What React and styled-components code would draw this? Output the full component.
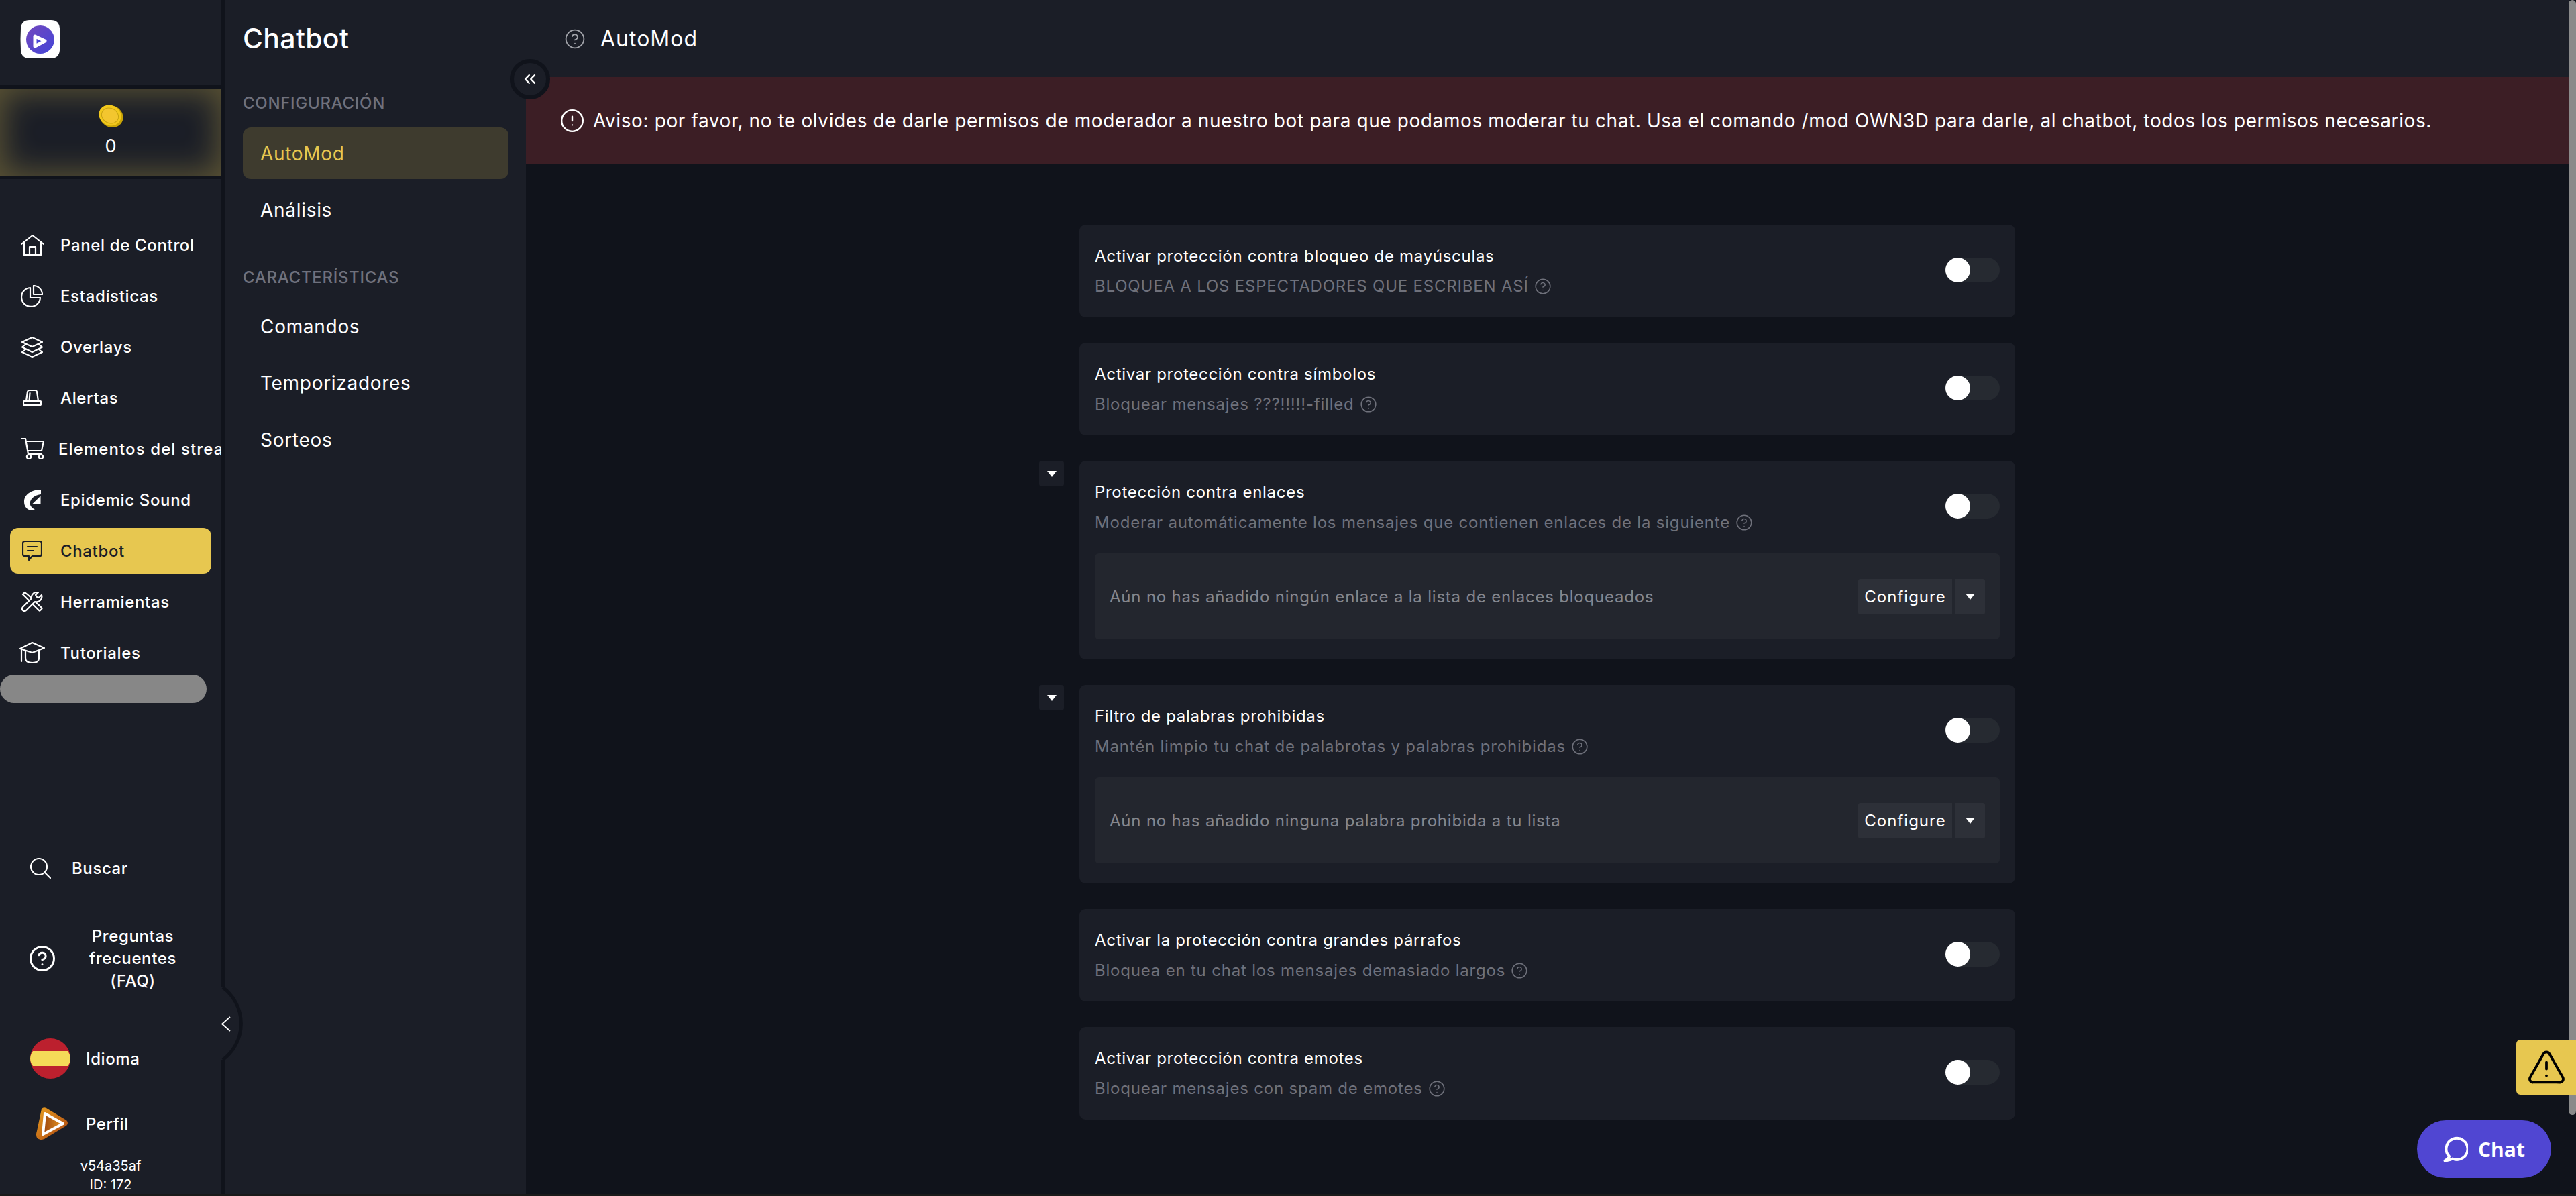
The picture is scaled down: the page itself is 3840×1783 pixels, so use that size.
import React from 'react'
import styled, { createGlobalStyle } from 'styled-components'
import { ChevronsLeft, CircleAlert, CircleHelp, TriangleAlert } from 'lucide-react'

const GlobalStyle = createGlobalStyle`
    html, body {
        margin: 0;
        padding: 0;
        background: #1a1a1a;
        font-family: "Inter", "Open Sans", sans-serif;
        color: #fff;
    }
    * { box-sizing: border-box; }
`

const Shell = styled.div`
    position: relative;
    display: flex;
    height: 1780px;
    overflow: hidden;
    background: #10131b;
`

const Rail = styled.aside`
    width: 335px;
    flex: none;
    display: flex;
    flex-direction: column;
    background: #1b1e27;
    border-right: 5px solid #10131b;
    overflow: hidden;
`

const LogoWrap = styled.div`
    height: 127px;
    padding: 30px 0 0 30px;
`

const CoinPanel = styled.div`
    height: 140px;
    border-top: 5px solid #10131b;
    border-bottom: 5px solid #10131b;
    padding-top: 22px;
    display: flex;
    flex-direction: column;
    align-items: center;
    gap: 9px;
    background: #1b1e27;
    box-shadow: inset 0 0 46px 6px rgba(231, 199, 80, 0.32);
`

const CoinValue = styled.span`
    font-size: 27px;
    line-height: 34px;
`

const Nav = styled.nav`
    height: 675px;
    margin-top: 64px;
    display: flex;
    flex-direction: column;
    gap: 8px;
`

const NavRow = styled.div`
    width: 300px;
    height: 68px;
    flex: none;
    margin-left: 15px;
    display: flex;
    align-items: center;
    gap: ${p => (p.$tight ? '19px' : '22px')};
    padding-left: 13px;
    border-radius: 12px;
    white-space: nowrap;
    font-size: 24px;
    font-weight: 500;
    letter-spacing: ${p => (p.$tight ? '1.1px' : '0.65px')};
    background: ${p => (p.$active ? '#e7c750' : 'transparent')};
    color: ${p => (p.$active ? '#1b1e27' : '#fff')};
`

const NavIcon = styled.span`
    width: 40px;
    flex: none;
    display: flex;
    justify-content: center;
    align-items: center;
`

const GreyPill = styled.div`
    width: 308px;
    height: 42px;
    flex: none;
    margin-top: -9px;
    border-radius: 21px;
    background: #878787;
`

const Footer = styled.div`
    margin-top: auto;
    display: flex;
    flex-direction: column;
    font-size: 24px;
    font-weight: 500;
    letter-spacing: 0.6px;
`

const FootRow = styled.div`
    display: flex;
    align-items: center;
    height: ${p => p.$h}px;
    margin-top: ${p => p.$top || 0}px;
    padding-left: ${p => p.$left || 45}px;
    gap: ${p => p.$gap}px;
`

const FaqText = styled.span`
    width: 150px;
    text-align: center;
    line-height: 33.5px;
`

const Version = styled.div`
    margin-top: 24px;
    text-align: center;
    font-size: 20px;
    font-weight: 400;
    line-height: 28px;
    letter-spacing: 0;
`

const ArcHandle = styled.svg`
    position: absolute;
    left: 326px;
    top: 1470px;
`

const SubBar = styled.aside`
    width: 449px;
    flex: none;
    padding: 37px 26px 0 27px;
    background: #1b1e27;
`

const SubTitle = styled.h1`
    margin: 0;
    font-size: 41px;
    line-height: 40px;
    font-weight: 500;
    letter-spacing: 0.3px;
`

const SectionLabel = styled.div`
    margin-top: ${p => p.$top}px;
    margin-bottom: ${p => p.$bottom}px;
    font-size: 24px;
    line-height: 30px;
    font-weight: 500;
    letter-spacing: 0.7px;
    color: #6f717d;
`

const SubList = styled.div`
    display: flex;
    flex-direction: column;
    gap: 7.5px;
`

const SubItem = styled.div`
    height: 77px;
    display: flex;
    align-items: center;
    padding-left: 26px;
    border-radius: 12px;
    font-size: 28px;
    letter-spacing: 0.7px;
    background: ${p => (p.$active ? '#3e3b2e' : 'transparent')};
    color: ${p => (p.$active ? '#e7c750' : '#fff')};
`

const CollapseButton = styled.button`
    position: absolute;
    left: 760px;
    top: 88px;
    width: 60px;
    height: 60px;
    padding: 0;
    display: flex;
    align-items: center;
    justify-content: center;
    border-radius: 50%;
    border: 6px solid #10131b;
    background: #1b1e27;
    color: #fff;
`

const Main = styled.main`
    flex: 1;
    min-width: 0;
    display: flex;
    flex-direction: column;
`

const TopBar = styled.header`
    height: 115px;
    flex: none;
    display: flex;
    align-items: center;
    gap: 22px;
    padding-left: 57px;
    background: #1b1e27;
    font-size: 32px;
    letter-spacing: 1px;
`

const Banner = styled.div`
    height: 130px;
    flex: none;
    display: flex;
    align-items: center;
    gap: 12px;
    padding-left: 50px;
    background: #3c1e25;
    font-size: 28px;
    letter-spacing: 0.6px;
`

const Content = styled.div`
    padding-top: 90px;
    display: flex;
    flex-direction: column;
    align-items: center;
    gap: 38px;
`

const Card = styled.section`
    position: relative;
    width: 1395px;
    padding: 0 23px;
    border-radius: 9px;
    background: #1b1e27;
`

const CardHead = styled.div`
    height: 138px;
    display: flex;
    align-items: center;
    justify-content: space-between;
`

const CardTitle = styled.div`
    font-size: 24px;
    line-height: 30px;
    color: #fff;
    letter-spacing: 0.7px;
`

const CardSub = styled.div`
    display: flex;
    align-items: center;
    gap: 8px;
    margin-top: 15px;
    font-size: 24px;
    line-height: 30px;
    color: #6f717b;
    letter-spacing: 0.8px;
`

const Toggle = styled.div`
    position: relative;
    width: 81px;
    height: 37px;
    margin-bottom: 3px;
    border-radius: 19px;
    background: #262a31;
    &::before {
        content: '';
        position: absolute;
        left: 0;
        top: 0;
        width: 37px;
        height: 37px;
        border-radius: 50%;
        background: #fff;
    }
`

const Expander = styled.button`
    position: absolute;
    left: -60px;
    top: 0;
    width: 37px;
    height: 38px;
    padding: 0;
    border: none;
    border-radius: 4px;
    display: flex;
    align-items: center;
    justify-content: center;
    background: #1b1e27;
`

const Caret = styled.span`
    width: 0;
    height: 0;
    border-left: 7px solid transparent;
    border-right: 7px solid transparent;
    border-top: 9px solid #fff;
`

const InnerBox = styled.div`
    height: 128px;
    margin-bottom: 30px;
    padding: 0 22px;
    display: flex;
    align-items: center;
    justify-content: space-between;
    border-radius: 6px;
    background: #23262e;
    font-size: 24px;
    letter-spacing: 0.8px;
    color: #85878f;
`

const ButtonGroup = styled.div`
    display: flex;
    gap: 4px;
`

const ConfigureButton = styled.button`
    width: 140px;
    height: 53px;
    padding: 0;
    border: none;
    border-radius: 3px 0 0 3px;
    background: #2d3038;
    color: #fff;
    font-family: inherit;
    font-size: 24px;
    letter-spacing: 1px;
`

const CaretButton = styled.button`
    width: 45px;
    height: 53px;
    padding: 0;
    border: none;
    border-radius: 0 3px 3px 0;
    display: flex;
    align-items: center;
    justify-content: center;
    background: #2d3038;
`

const Scrollbar = styled.div`
    width: 11px;
    flex: none;
    background: #10131b;
`

const ScrollThumb = styled.div`
    height: 1662px;
    border-radius: 6px;
    background: #8a8a8a;
`

const WarningTab = styled.div`
    position: absolute;
    right: 0;
    top: 1550px;
    width: 89px;
    height: 82px;
    display: flex;
    align-items: center;
    justify-content: center;
    border-radius: 6px 0 0 6px;
    background: #e7c750;
    color: #000;
`

const ChatButton = styled.button`
    position: absolute;
    right: 37px;
    top: 1670px;
    width: 200px;
    height: 86px;
    padding: 0;
    border: none;
    border-radius: 43px;
    display: flex;
    align-items: center;
    justify-content: center;
    gap: 15px;
    background: #5046d2;
    color: #fff;
    font-family: "Open Sans", sans-serif;
    font-size: 30px;
    font-weight: 700;
`

const line = { fill: 'none', stroke: 'currentColor', strokeWidth: 2.2, strokeLinejoin: 'round', strokeLinecap: 'round' }

const HomeIcon = () => (
    <svg width="35" height="31" viewBox="0 0 35 31" {...line}>
        <path d="M1 14 17.5 1 34 14" />
        <path d="M5 11V30H30V11" />
        <path d="M13 30V18H22V30" />
    </svg>
)

const PieIcon = () => (
    <svg width="32" height="32" viewBox="0 0 32 32" {...line}>
        <path d="M13 4A14 14 0 1 0 28 19H13Z" />
        <path d="M18 1A13 13 0 0 1 31 14H18Z" />
    </svg>
)

const LayersIcon = () => (
    <svg width="32" height="31" viewBox="0 0 32 31" {...line}>
        <path d="M16 1 31 8 16 15 1 8Z" />
        <path d="M6 11.5 1 15.5 16 23 31 15.5 26 11.5" />
        <path d="M6 19 1 23 16 30 31 23 26 19" />
    </svg>
)

const SirenIcon = () => (
    <svg width="28" height="24" viewBox="0 0 28 24" {...line}>
        <path d="M5 17 7 3Q7.5 1 10 1H18Q20.500 1 21 3L23 17" />
        <rect x="1" y="17" width="26" height="6" rx="1" />
        <path d="M10.500 5 9.500 17" />
    </svg>
)

const CartIcon = () => (
    <svg width="35" height="32" viewBox="0 0 35 32" {...line}>
        <path d="M1 1H7L11 24H31" />
        <path d="M8 5H34L31 19H10" />
        <circle cx="12" cy="28" r="3.200" />
        <circle cx="30" cy="28" r="3.200" />
    </svg>
)

const EpidemicIcon = () => (
    <svg width="25" height="30" viewBox="0 0 25 30" fill="currentColor">
        <path d="M25 0C11 0 0 7 0 18 0 24 3 28 7 30H16C11 27 7.500 23 9 18 10.500 13 15 9 22 7.500L25 7Z" />
        <path d="M24.500 9.500 12 21.500H24.500Z" />
    </svg>
)

const ChatbotIcon = () => (
    <svg width="30" height="30" viewBox="0 0 30 30" {...line}>
        <path d="M4 1H26Q29 1 29 4V20Q29 23 26 23H15L10 29V23H4Q1 23 1 20V4Q1 1 4 1Z" />
        <path d="M8 9H22M8 15H17" />
    </svg>
)

const ToolsIcon = () => (
    <svg width="32" height="30" viewBox="0 0 32 30" {...line}>
        <path d="M2 4 5 1 11 6 30 24Q31 25 30 26L28 28Q27 29 26 28L8 10Z" />
        <path d="M30 5A8 8 0 0 1 20 15L7 28A3.500 3.500 0 0 1 2 23L15 10A8 8 0 0 1 25 1L21 5 23 8 26 9Z" fill="#1b1e27" />
    </svg>
)

const CapIcon = () => (
    <svg width="38" height="32" viewBox="0 0 38 32" {...line}>
        <path d="M19 1 37 9 19 16 1 10Z" />
        <path d="M9 14V24Q9 31 19 31 29 31 29 24V13" />
        <path d="M3 11V29" />
    </svg>
)

const SearchIcon = () => (
    <svg width="31" height="31" viewBox="0 0 31 31" {...line}>
        <circle cx="13" cy="13" r="12" />
        <path d="M22 22 30 30" />
    </svg>
)

const LogoMark = () => (
    <svg width="60" height="57" viewBox="0 0 60 57">
        <defs>
            <linearGradient id="logoFill" x1="0" y1="0" x2="1" y2="1">
                <stop offset="0" stopColor="#7247bd" />
                <stop offset="1" stopColor="#4446d8" />
            </linearGradient>
        </defs>
        <path d="M14 0H46Q58 0 59 12 60 28 59 45 58 57 46 57H14Q2 57 1 45 0 28 1 12 2 0 14 0Z" fill="#fff" />
        <circle cx="30" cy="29" r="21" fill="url(#logoFill)" />
        <path d="M22 24 37 31 22 39Z" fill="#4b46d6" stroke="#fff" strokeWidth="5" strokeLinejoin="round" />
    </svg>
)

const CoinIcon = () => (
    <svg width="40" height="38" viewBox="0 0 40 38">
        <ellipse cx="21" cy="19.500" rx="18" ry="16" transform="rotate(28 21 19.500)" fill="#c9a406" />
        <ellipse cx="19" cy="18" rx="17" ry="15" transform="rotate(28 19 18)" fill="#f2c81c" />
        <ellipse cx="19" cy="18.500" rx="13" ry="11" transform="rotate(28 19 18.500)" fill="#f3c62f" stroke="#c8a313" strokeWidth="1" />
    </svg>
)

const SpainFlag = () => (
    <svg width="60" height="60" viewBox="0 0 60 60">
        <circle cx="30" cy="30" r="30" fill="#bc202e" />
        <path d="M4 19H56Q60 25 60 30 60 36 56 41H4Q0 36 0 30 0 25 4 19Z" fill="#f5da58" />
    </svg>
)

const ProfileMark = () => (
    <svg width="50" height="50" viewBox="0 0 50 50">
        <defs>
            <linearGradient id="profileFill" x1="0" y1="0" x2="1" y2="1">
                <stop offset="0" stopColor="#eaa021" />
                <stop offset="1" stopColor="#a8420f" />
            </linearGradient>
            <linearGradient id="profileCore" x1="1" y1="0" x2="0" y2="0">
                <stop offset="0" stopColor="#e8981f" />
                <stop offset="1" stopColor="#9c4510" />
            </linearGradient>
        </defs>
        <path d="M9 3Q12 0 16 2L46 20Q50 24 46 28L13 48Q6 51 2 46 0 42 2 36Z" fill="url(#profileFill)" />
        <path d="M14 10 41 25 11 41Z" fill="url(#profileCore)" stroke="#fff" strokeWidth="4" strokeLinejoin="round" />
    </svg>
)

const ChatBubble = () => (
    <svg width="37" height="39" viewBox="0 0 37 39" fill="none" stroke="#fff" strokeWidth="4" strokeLinecap="round" strokeLinejoin="round">
        <path d="M9 30A16 16 0 1 1 14 33.500C10.500 35 6 36.500 2.500 36.500 5 35 8 33 9 30Z" />
    </svg>
)

const NAV = [
    { label: 'Panel de Control', icon: <HomeIcon /> },
    { label: 'Estadísticas', icon: <PieIcon /> },
    { label: 'Overlays', icon: <LayersIcon /> },
    { label: 'Alertas', icon: <SirenIcon /> },
    { label: 'Elementos del stream', icon: <CartIcon />, tight: true },
    { label: 'Epidemic Sound', icon: <EpidemicIcon /> },
    { label: 'Chatbot', icon: <ChatbotIcon />, active: true },
    { label: 'Herramientas', icon: <ToolsIcon /> },
    { label: 'Tutoriales', icon: <CapIcon /> },
]

const HELP = <CircleHelp size={26} strokeWidth={1.4} />

function SettingCard({ title, sub, note }) {
    return (
        <Card>
            {note && <Expander><Caret /></Expander>}
            <CardHead>
                <div>
                    <CardTitle>{title}</CardTitle>
                    <CardSub>{sub} {HELP}</CardSub>
                </div>
                <Toggle />
            </CardHead>
            {note && (
                <InnerBox>
                    {note}
                    <ButtonGroup>
                        <ConfigureButton>Configure</ConfigureButton>
                        <CaretButton><Caret /></CaretButton>
                    </ButtonGroup>
                </InnerBox>
            )}
        </Card>
    )
}

export default function App() {
    return (
        <>
            <GlobalStyle />
            <Shell>
                <Rail>
                    <LogoWrap><LogoMark /></LogoWrap>
                    <CoinPanel>
                        <CoinIcon />
                        <CoinValue>0</CoinValue>
                    </CoinPanel>
                    <Nav>
                        {NAV.map(item => (
                            <NavRow key={item.label} $active={item.active} $tight={item.tight}>
                                <NavIcon>{item.icon}</NavIcon>
                                {item.label}
                            </NavRow>
                        ))}
                        <GreyPill />
                    </Nav>
                    <Footer>
                        <FootRow $h={60} $gap={31}><SearchIcon />Buscar</FootRow>
                        <FootRow $h={100} $top={55} $gap={39}>
                            <CircleHelp size={42} strokeWidth={1.7} style={{ marginLeft: -3 }} />
                            <FaqText>Preguntas frecuentes (FAQ)</FaqText>
                        </FootRow>
                        <FootRow $h={60} $top={69} $gap={23}><SpainFlag />Idioma</FootRow>
                        <FootRow $h={50} $top={42} $left={53} $gap={25}><ProfileMark />Perfil</FootRow>
                        <Version>v54a35af<br />ID: 172</Version>
                    </Footer>
                </Rail>
                <SubBar>
                    <SubTitle>Chatbot</SubTitle>
                    <SectionLabel $top={62} $bottom={21}>CONFIGURACIÓN</SectionLabel>
                    <SubList>
                        <SubItem $active>AutoMod</SubItem>
                        <SubItem>Análisis</SubItem>
                    </SubList>
                    <SectionLabel $top={47.5} $bottom={19}>CARACTERÍSTICAS</SectionLabel>
                    <SubList>
                        <SubItem>Comandos</SubItem>
                        <SubItem>Temporizadores</SubItem>
                        <SubItem>Sorteos</SubItem>
                    </SubList>
                </SubBar>
                <Main>
                    <TopBar>
                        <CircleHelp size={32} strokeWidth={1.4} color="#a0a2a8" />
                        AutoMod
                    </TopBar>
                    <Banner>
                        <CircleAlert size={38} strokeWidth={1.5} />
                        Aviso: por favor, no te olvides de darle permisos de moderador a nuestro bot para que podamos moderar tu chat. Usa el comando /mod OWN3D para darle, al chatbot, todos los permisos necesarios.
                    </Banner>
                    <Content>
                        <SettingCard title="Activar protección contra bloqueo de mayúsculas" sub="BLOQUEA A LOS ESPECTADORES QUE ESCRIBEN ASÍ" />
                        <SettingCard title="Activar protección contra símbolos" sub="Bloquear mensajes ???!!!!!-filled" />
                        <SettingCard title="Protección contra enlaces" sub="Moderar automáticamente los mensajes que contienen enlaces de la siguiente" note="Aún no has añadido ningún enlace a la lista de enlaces bloqueados" />
                        <SettingCard title="Filtro de palabras prohibidas" sub="Mantén limpio tu chat de palabrotas y palabras prohibidas" note="Aún no has añadido ninguna palabra prohibida a tu lista" />
                        <SettingCard title="Activar la protección contra grandes párrafos" sub="Bloquea en tu chat los mensajes demasiado largos" />
                        <SettingCard title="Activar protección contra emotes" sub="Bloquear mensajes con spam de emotes" />
                    </Content>
                </Main>
                <Scrollbar><ScrollThumb /></Scrollbar>
                <ArcHandle width="40" height="112" viewBox="0 0 40 112">
                    <path d="M0 2H6V110H0Z" fill="#1b1e27" />
                    <path d="M6 2A67 67 0 0 1 6 110" fill="#1b1e27" stroke="#10131b" strokeWidth="5" />
                    <polyline points="17,46 5,56.500 17,67" fill="none" stroke="#fff" strokeWidth="1.800" />
                </ArcHandle>
                <CollapseButton><ChevronsLeft size={28} strokeWidth={2} /></CollapseButton>
                <WarningTab><TriangleAlert size={60} strokeWidth={1.5} /></WarningTab>
                <ChatButton><ChatBubble />Chat</ChatButton>
            </Shell>
        </>
    )
}
